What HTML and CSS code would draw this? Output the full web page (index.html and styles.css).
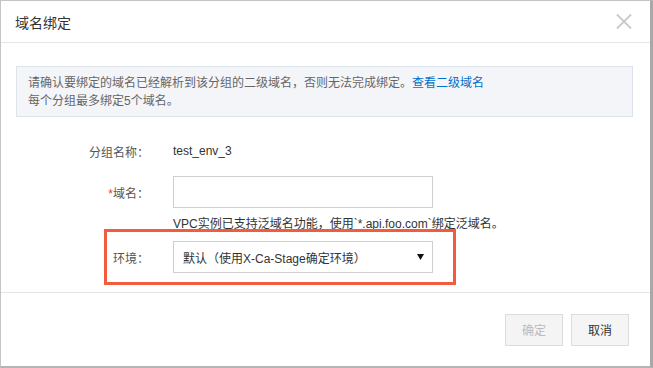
FILE: index.html
```html
<!DOCTYPE html>
<html lang="zh-CN">
<head>
    <meta charset="UTF-8">
    <title>域名绑定</title>
    <link rel="stylesheet" href="styles.css">
</head>
<body>
    <div class="dialog">
        <div class="dialog-header">
            <span class="dialog-title">域名绑定</span>
            <span class="close">
                <svg width="16" height="15" viewBox="0 0 16 15">
                    <path d="M1 0.5 L15 14.5 M15 0.5 L1 14.5" stroke="#c8c8c8" stroke-width="1.8" fill="none"/>
                </svg>
            </span>
        </div>
        <div class="dialog-body">
            <div class="notice">
                请确认要绑定的域名已经解析到该分组的二级域名，否则无法完成绑定。<a href="#">查看二级域名</a><br>
                每个分组最多绑定5个域名。
            </div>
            <div class="row row-group">
                <label class="label">分组名称：</label>
                <span class="value">test_env_3</span>
            </div>
            <div class="row row-domain">
                <label class="label"><em>*</em>域名：</label>
                <input class="text-input" type="text">
            </div>
            <div class="row row-hint">
                <span></span>
                <span class="hint">VPC实例已支持泛域名功能，使用`*.api.foo.com`绑定泛域名。</span>
            </div>
            <div class="row row-env">
                <span class="highlight"></span>
                <label class="label">环境：</label>
                <div class="select">
                    <span>默认（使用X-Ca-Stage确定环境）</span>
                    <svg width="7" height="6" viewBox="0 0 7 6"><path d="M0 0 H7 L3.5 6 Z" fill="#111"/></svg>
                </div>
            </div>
        </div>
        <div class="dialog-footer">
            <button class="btn btn-disabled">确定</button>
            <button class="btn">取消</button>
        </div>
    </div>
</body>
</html>
```

FILE: styles.css
```css
body {
    margin: 0;
    padding: 0;
    background: #fff;
    font-family: "Liberation Sans", "Noto Sans CJK SC", sans-serif;
    font-size: 12px;
    color: #333;
}
.dialog {
    width: 653px;
    height: 368px;
    box-sizing: border-box;
    border-top: 1px solid #c4c4c4;
    border-left: 1px solid #c4c4c4;
    border-right: 3px solid #a8a8a8;
    border-bottom: 2px solid #b4b4b4;
    display: flex;
    flex-direction: column;
    background: #fff;
}
.dialog-header {
    height: 41px;
    border-bottom: 1px solid #e5e5e5;
    display: flex;
    align-items: center;
    justify-content: space-between;
    padding: 0 18px 0 14px;
}
.dialog-title {
    font-size: 14px;
    color: #333;
}
.close svg {
    display: block;
}
.dialog-body {
    flex: 1;
    padding: 23px 17px 0 15px;
}
.notice {
    border: 1px solid #dde3eb;
    background: #f3f5f9;
    color: #666;
    line-height: 18px;
    padding: 7px 11px 6px;
}
.notice a {
    color: #0070cc;
    text-decoration: none;
}
.row {
    display: grid;
    grid-template-columns: 133px 260px;
    column-gap: 24px;
    align-items: center;
}
.label {
    text-align: right;
    color: #555;
}
.label em {
    font-style: normal;
    color: #e4393c;
}
.row-group {
    margin-top: 25px;
    height: 18px;
}
.row-domain {
    margin-top: 16px;
    height: 32px;
}
.text-input {
    height: 32px;
    box-sizing: border-box;
    border: 1px solid #cfcfcf;
    margin: 0;
    padding: 0 9px;
}
.row-hint {
    margin-top: 7px;
    line-height: 18px;
}
.hint {
    white-space: nowrap;
    color: #333;
}
.row-env {
    margin-top: 8px;
    height: 32px;
    position: relative;
}
.select {
    height: 32px;
    box-sizing: border-box;
    border: 1px solid #cfcfcf;
    display: flex;
    align-items: center;
    justify-content: space-between;
    padding: 0 8px 0 9px;
}
.highlight {
    position: absolute;
    left: 88px;
    top: -12px;
    width: 352px;
    height: 56px;
    box-sizing: border-box;
    border: 3px solid #f25b3c;
}
.dialog-footer {
    height: 73px;
    border-top: 1px solid #e5e5e5;
    display: flex;
    align-items: center;
    justify-content: flex-end;
    gap: 8px;
    padding-right: 21px;
}
.btn {
    width: 58px;
    height: 32px;
    border: 1px solid #dcdcdc;
    background: #f5f5f5;
    font-family: inherit;
    font-size: 12px;
    color: #333;
    padding: 0;
}
.btn-disabled {
    color: #bbb;
    background: #f4f4f4;
}
```
